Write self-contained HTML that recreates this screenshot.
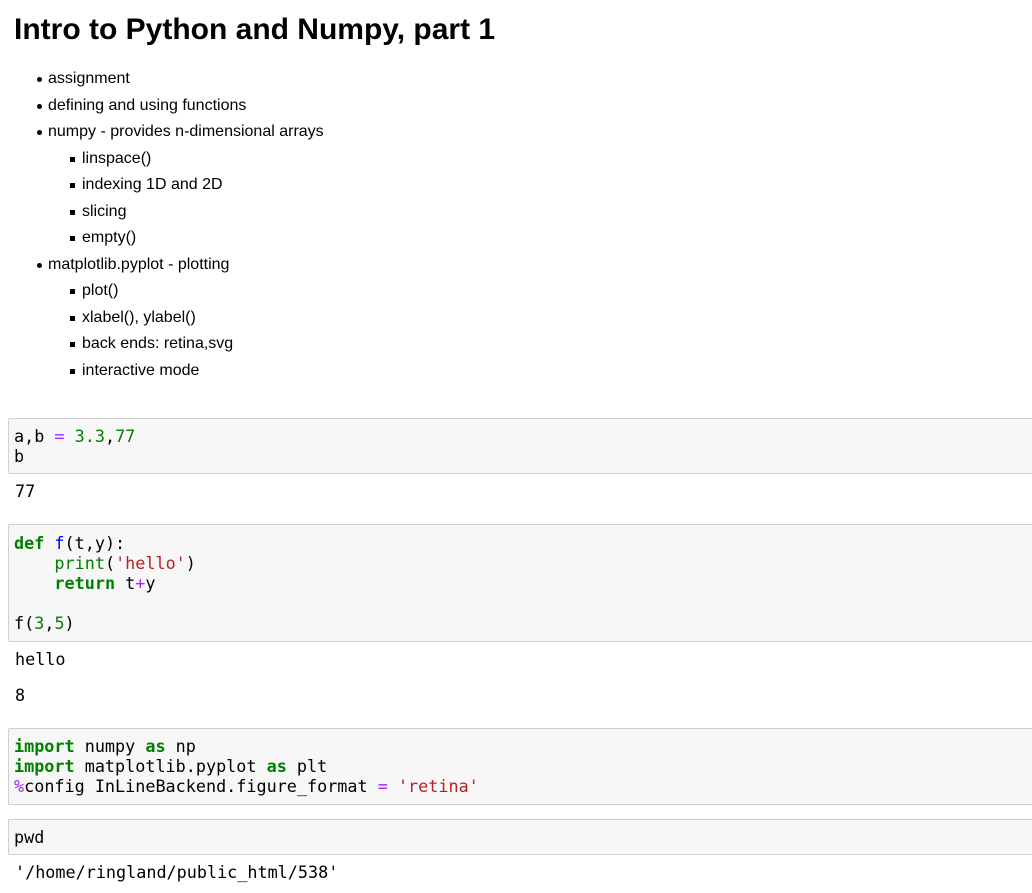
<!DOCTYPE html>
<html><head><meta charset="utf-8"><style>
body{margin:0;background:#fff;width:1032px;height:893px;overflow:hidden;position:relative;font-family:"Liberation Sans",sans-serif;color:#000}
h1{position:absolute;left:14px;top:12px;margin:0;font-size:30px;font-weight:bold;line-height:36px}
.li{position:absolute;font-size:16px;line-height:20px;white-space:nowrap}
.b1::before{content:"";position:absolute;left:-11px;top:8px;width:5px;height:5px;border-radius:50%;background:#000}
.b2::before{content:"";position:absolute;left:-12px;top:8px;width:5px;height:5px;background:#000}
.cell{position:absolute;left:8px;width:1030px;background:#f7f7f7;border:1px solid #cfcfcf;border-radius:2px;box-sizing:border-box}
pre{margin:0;font-family:"DejaVu Sans Mono",monospace;font-size:16.8px;line-height:20px;white-space:pre}
.cell pre{position:absolute;left:5px}
.out{position:absolute;left:15px}
.k{color:#008000;font-weight:bold}.o{color:#aa22ff}.n{color:#008000}.s{color:#ba2121}.f{color:#0000ff}.bi{color:#008000}
</style></head><body>
<h1>Intro to Python and Numpy, part 1</h1>
<div class="li b1" style="left:48px;top:69px">assignment</div>
<div class="li b1" style="left:48px;top:96px">defining and using functions</div>
<div class="li b1" style="left:48px;top:122px">numpy - provides n-dimensional arrays</div>
<div class="li b2" style="left:82px;top:149px">linspace()</div>
<div class="li b2" style="left:82px;top:175px">indexing 1D and 2D</div>
<div class="li b2" style="left:82px;top:202px">slicing</div>
<div class="li b2" style="left:82px;top:228px">empty()</div>
<div class="li b1" style="left:48px;top:255px">matplotlib.pyplot - plotting</div>
<div class="li b2" style="left:82px;top:281px">plot()</div>
<div class="li b2" style="left:82px;top:308px">xlabel(), ylabel()</div>
<div class="li b2" style="left:82px;top:334px">back ends: retina,svg</div>
<div class="li b2" style="left:82px;top:361px">interactive mode</div>

<div class="cell" style="top:418px;height:56px"><pre style="top:7px">a,b <span class="o">=</span> <span class="n">3.3</span>,<span class="n">77</span>
b</pre></div>
<pre class="out" style="top:481px">77</pre>

<div class="cell" style="top:524px;height:118px"><pre style="top:8px"><span class="k">def</span> <span class="f">f</span>(t,y):
    <span class="bi">print</span>(<span class="s">'hello'</span>)
    <span class="k">return</span> t<span class="o">+</span>y

f(<span class="n">3</span>,<span class="n">5</span>)</pre></div>
<pre class="out" style="top:649px">hello</pre>
<pre class="out" style="top:685px">8</pre>

<div class="cell" style="top:728px;height:77px"><pre style="top:7px"><span class="k">import</span> numpy <span class="k">as</span> np
<span class="k">import</span> matplotlib.pyplot <span class="k">as</span> plt
<span class="o">%</span>config InLineBackend.figure_format <span class="o">=</span> <span class="s">'retina'</span></pre></div>

<div class="cell" style="top:819px;height:36px"><pre style="top:7px">pwd</pre></div>
<pre class="out" style="top:862px">'/home/ringland/public_html/538'</pre>
</body></html>
